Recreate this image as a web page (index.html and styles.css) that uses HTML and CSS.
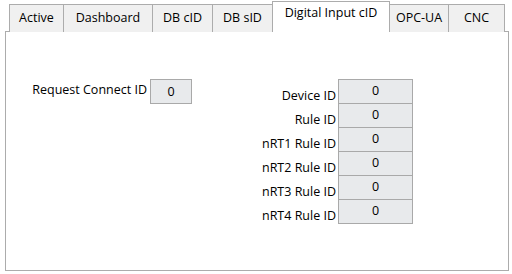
FILE: index.html
```html
<!DOCTYPE html>
<html lang="en">

<head>
    <meta charset="UTF-8">
    <meta name="viewport" content="width=device-width, initial-scale=1.0">
    <title>Digital Input cID</title>
    <link rel="stylesheet" href="styles.css">
</head>

<body>
    <div id="window">
        <div id="tabs">
            <span class="tab w-active">Active</span>
            <span class="tab w-dash">Dashboard</span>
            <span class="tab w-db">DB cID</span>
            <span class="tab w-db">DB sID</span>
            <span class="tab w-dig on">Digital Input cID</span>
            <span class="tab w-opc">OPC-UA</span>
            <span class="tab w-cnc">CNC</span>
        </div>
        <div id="panel">
            <div class="request">
                <span class="req-label">Request Connect ID</span>
                <span class="box small">0</span>
            </div>
            <div class="ids">
                <span class="label">Device ID</span><span class="box">0</span>
                <span class="label">Rule ID</span><span class="box">0</span>
                <span class="label">nRT1 Rule ID</span><span class="box">0</span>
                <span class="label">nRT2 Rule ID</span><span class="box">0</span>
                <span class="label">nRT3 Rule ID</span><span class="box">0</span>
                <span class="label">nRT4 Rule ID</span><span class="box">0</span>
            </div>
        </div>
    </div>
</body>

</html>
```

FILE: styles.css
```css
* {
    margin: 0;
    padding: 0;
    box-sizing: border-box;
}

body {
    background: #fff;
    font-family: "Open Sans", "Noto Sans", sans-serif;
    font-size: 12.5px;
    color: #000;
}

#window {
    padding: 1px 0 0 5px;
    width: 509px;
}

#tabs {
    display: flex;
    align-items: flex-end;
    margin-left: 4px;
    margin-bottom: -1px;
    height: 31px;
}

.tab {
    position: relative;
    height: 28px;
    margin-left: -1px;
    border: 1px solid #acacac;
    border-bottom: none;
    background: #f0f0f0;
    text-align: center;
    line-height: 24px;
    padding-top: 1px;
}

.tab:first-child {
    margin-left: 0;
}

.tab.on {
    z-index: 2;
    height: 31px;
    background: #fff;
    padding-top: 0;
    line-height: 22px;
}

.w-active { width: 55px; }
.w-dash { width: 90px; }
.w-db { width: 61px; }
.w-dig { width: 118px; }
.w-opc { width: 60px; }
.w-cnc { width: 57px; }

#panel {
    display: flex;
    align-items: flex-start;
    height: 240px;
    border: 1px solid #acacac;
    background: #fff;
    padding-top: 47px;
}

.request {
    display: flex;
    justify-content: flex-end;
    width: 186px;
}

.req-label {
    padding: 3px 3px 0 0;
    line-height: 16px;
}

.box {
    display: block;
    width: 75px;
    height: 25px;
    border: 1px solid #a9a9a9;
    background: #e8eaec;
    text-align: center;
    line-height: 22px;
}

.box.small {
    width: 42px;
    line-height: 24px;
}

.ids {
    display: grid;
    grid-template-columns: 144px 75px;
    column-gap: 2px;
}

.ids .box + .label,
.ids .label:nth-child(n+3) + .box {
    margin-top: -1px;
}

.label {
    text-align: right;
    padding-top: 9px;
    line-height: 16px;
}
```
